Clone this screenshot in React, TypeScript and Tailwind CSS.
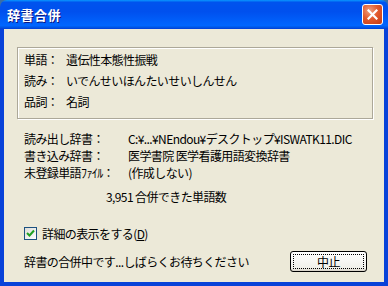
import React from "react";

const font = { fontFamily: '"Noto Sans CJK JP", "Noto Sans", sans-serif' };

function TitleBar() {
  return (
    <div className="flex h-[29px] shrink-0 items-center justify-between rounded-t-[7px] bg-[linear-gradient(180deg,#0997ff_0%,#0053ee_8%,#0050ee_40%,#0066ff_88%,#0058e6_94%,#003dd7_100%)] pl-[7px] pr-[5px]">
      <span className="text-[13px] font-bold leading-none tracking-[0.5px] text-white [text-shadow:1px_1px_0_#0a1883]">
        辞書合併
      </span>
      <button
        aria-label="閉じる"
        className="flex h-[21px] w-[21px] items-center justify-center rounded-[3px] border border-white bg-[radial-gradient(circle_at_35%_30%,#f0a080_0%,#e35a2d_45%,#c23a14_100%)]"
      >
        <svg width="11" height="11" viewBox="0 0 11 11">
          <path d="M1.5 1.5 L9.5 9.5 M9.5 1.5 L1.5 9.5" stroke="white" strokeWidth="2.2" strokeLinecap="square" />
        </svg>
      </button>
    </div>
  );
}

function GroupRow({ label, value }: { label: string; value: string }) {
  return (
    <div className="flex h-[21px] items-center">
      <span className="w-[42px] shrink-0 whitespace-nowrap">{label}</span>
      <span className="whitespace-nowrap">{value}</span>
    </div>
  );
}

function InfoRow({ label, value }: { label: string; value: string }) {
  return (
    <div className="flex h-[17px] items-center">
      <span className="w-[104px] shrink-0 whitespace-nowrap">{label}</span>
      <span className="whitespace-nowrap">{value}</span>
    </div>
  );
}

export default function App() {
  return (
    <div className="h-[286px] w-[388px] bg-[#3a6ea5]" style={font}>
      <div className="flex h-full flex-col">
        <TitleBar />
        <div className="flex flex-1 flex-col border-x-4 border-b-4 border-[#0842d9] bg-[#ece9d8] text-[12px] leading-none tracking-[-0.6px] text-black">
          {/* Word group */}
          <div className="ml-[13px] mr-[11px] mt-[18px] border border-[#aca899] shadow-[inset_1px_1px_0_#fff,1px_1px_0_#fff] px-[6px] pb-[6px] pt-[1px]">
            <GroupRow label="単語：" value="遺伝性本態性振戦" />
            <GroupRow label="読み：" value="いでんせいほんたいせいしんせん" />
            <GroupRow label="品詞：" value="名詞" />
          </div>

          {/* Dictionaries */}
          <div className="ml-[20px] mt-[11px]">
            <InfoRow label="読み出し辞書：" value="C:¥...¥NEndou¥デスクトップ¥ISWATK11.DIC" />
            <InfoRow label="書き込み辞書：" value="医学書院 医学看護用語変換辞書" />
            <InfoRow label="未登録単語ﾌｧｲﾙ：" value="(作成しない)" />
          </div>
          <div className="ml-[102px] mt-[7px] flex h-[17px] items-center whitespace-nowrap">3,951 合併できた単語数</div>

          {/* Details checkbox */}
          <label className="ml-[20px] mt-[20px] flex h-[17px] items-center gap-[5px]">
            <span className="flex h-[13px] w-[13px] items-center justify-center border border-[#1c5180] bg-[linear-gradient(135deg,#dcdcd7,#fff)]">
              <svg width="9" height="9" viewBox="0 0 9 9">
                <path d="M1 4 L3.5 6.5 L8 1.5" stroke="#21a121" strokeWidth="2" fill="none" />
              </svg>
            </span>
            <span className="whitespace-nowrap">
              詳細の表示をする(<span className="underline">D</span>)
            </span>
          </label>

          {/* Status + cancel */}
          <div className="ml-[20px] mr-[17px] mt-[9px] flex h-[21px] items-center justify-between">
            <span className="whitespace-nowrap">辞書の合併中です...しばらくお待ちください</span>
            <button className="flex h-[21px] w-[77px] items-center justify-center rounded-[3px] border border-black bg-[linear-gradient(180deg,#fff,#f0f0ea_85%,#d6d0c5)] p-[2px]">
              <span className="flex h-full w-full items-center justify-center border border-dotted border-black">
                中止
              </span>
            </button>
          </div>
        </div>
      </div>
    </div>
  );
}
